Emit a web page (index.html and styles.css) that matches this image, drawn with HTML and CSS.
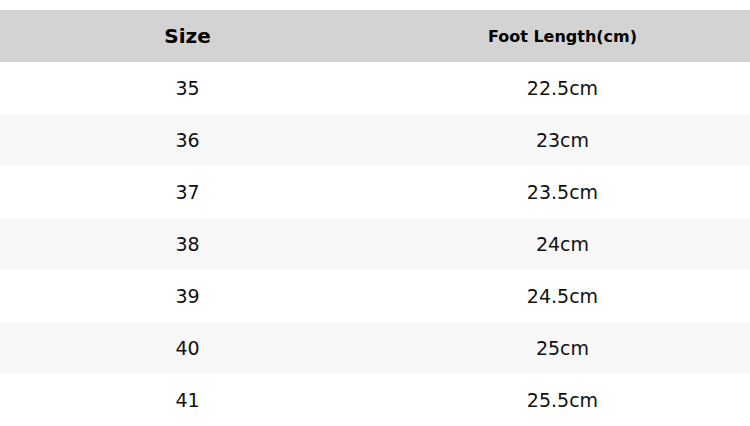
FILE: index.html
```html
<!DOCTYPE html>
<html>
<head>
<meta charset="utf-8">
<link rel="stylesheet" href="styles.css">
</head>
<body>
<table class="size-table">
  <thead>
    <tr><th class="h-size">Size</th><th class="h-foot">Foot Length(cm)</th></tr>
  </thead>
  <tbody>
    <tr><td>35</td><td>22.5cm</td></tr>
    <tr><td>36</td><td>23cm</td></tr>
    <tr><td>37</td><td>23.5cm</td></tr>
    <tr><td>38</td><td>24cm</td></tr>
    <tr><td>39</td><td>24.5cm</td></tr>
    <tr><td>40</td><td>25cm</td></tr>
    <tr><td>41</td><td>25.5cm</td></tr>
  </tbody>
</table>
</body>
</html>
```
FILE: styles.css
```css
html, body {
  margin: 0;
  padding: 0;
  background: #ffffff;
}
body {
  padding-top: 10px;
  font-family: "DejaVu Sans", sans-serif;
  color: #111111;
}
.size-table {
  width: 750px;
  border-collapse: collapse;
  table-layout: fixed;
}
.size-table th,
.size-table td {
  height: 52px;
  padding: 0;
  text-align: center;
  vertical-align: middle;
  width: 50%;
}
.size-table thead tr {
  background: #d3d3d3;
}
.size-table th {
  color: #000000;
}
.h-size {
  font-size: 20px;
  font-weight: bold;
}
.h-foot {
  font-size: 16px;
  font-weight: bold;
}
.size-table td {
  font-size: 19px;
}
.size-table tbody tr:nth-child(even) {
  background: #f8f8f8;
}
```
